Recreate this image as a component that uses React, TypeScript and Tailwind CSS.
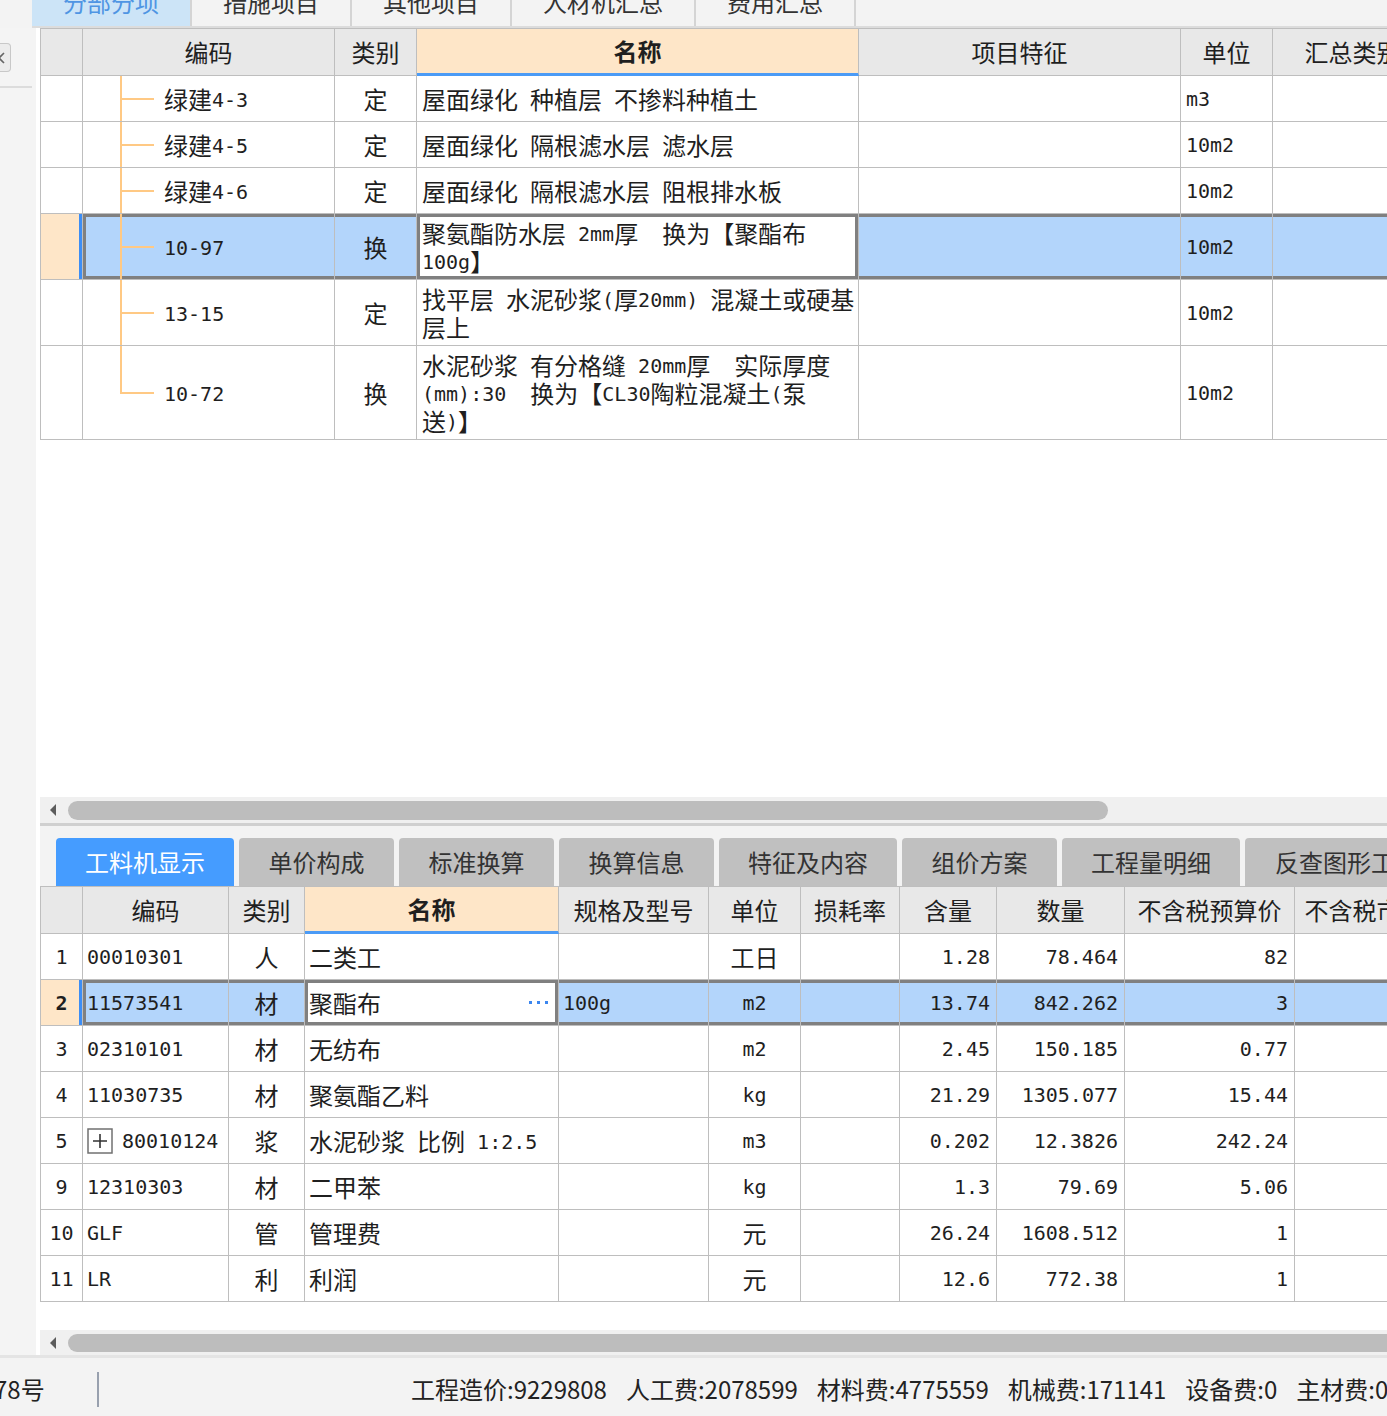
import React from "react";

const LINE = "border-[#bebebe]";

function Txt({ s }: { s: string }) {
  const parts = s.split(/([\x20-\x7e]+)/);
  return (
    <>
      {parts.map((p, i) =>
        p === "" ? null : /^[\x20-\x7e]+$/.test(p) ? (
          <span key={i} className="font-['DejaVu_Sans_Mono',monospace] text-[20px] leading-[20px] align-[2px]">
            {p}
          </span>
        ) : (
          <span key={i}>{p}</span>
        )
      )}
    </>
  );
}

const topTabs = [
  { t: "分部分项", w: "w-[160px]", active: true },
  { t: "措施项目", w: "w-[160px]" },
  { t: "其他项目", w: "w-[160px]" },
  { t: "人材机汇总", w: "w-[184px]" },
  { t: "费用汇总", w: "w-[160px]" },
];

function TopTabs() {
  return (
    <div className="h-[28px] shrink-0 pl-[32px] bg-[#f3f3f3]">
      <div className="h-full border-b-2 border-[#dcdcdc] flex overflow-hidden">
        {topTabs.map((t) => (
          <div
            key={t.t}
            className={`${t.w} shrink-0 h-[26px] overflow-hidden flex flex-col items-center border-r-2 border-[#d4d4d4] ${
              t.active ? "bg-[#cce4f7] text-[#4f95e3]" : "bg-[#f3f3f3] text-[#333]"
            }`}
          >
            <div className="mt-[-18px] h-[40px] leading-[40px] text-[24px] whitespace-nowrap">{t.t}</div>
          </div>
        ))}
      </div>
    </div>
  );
}

function LeftPanel() {
  return (
    <div className="w-[36px] shrink-0 bg-[#f4f4f4] flex flex-col">
      <div className="mt-[15px] h-[29px] w-[11px] rounded-r-[4px] border border-l-0 border-[#c8c8c8] bg-[#ececec] flex items-center overflow-hidden">
        <svg width="8" height="12" viewBox="0 0 8 12" className="-ml-[2px]">
          <path d="M6 1 L1 6 L6 11" stroke="#666" strokeWidth="1.6" fill="none" />
        </svg>
      </div>
      <div className="mt-[14px] h-[2px] w-[32px] bg-[#dcdcdc]" />
    </div>
  );
}

type TopRow = { code: string; type: string; name: string; unit: string; h: string; sel?: boolean };

const topRows: TopRow[] = [
  { code: "绿建4-3", type: "定", name: "屋面绿化 种植层 不掺料种植土", unit: "m3", h: "h-[46px]" },
  { code: "绿建4-5", type: "定", name: "屋面绿化 隔根滤水层 滤水层", unit: "10m2", h: "h-[46px]" },
  { code: "绿建4-6", type: "定", name: "屋面绿化 隔根滤水层 阻根排水板", unit: "10m2", h: "h-[46px]" },
  { code: "10-97", type: "换", name: "聚氨酯防水层 2mm厚　换为【聚酯布 100g】", unit: "10m2", h: "h-[66px]", sel: true },
  { code: "13-15", type: "定", name: "找平层 水泥砂浆(厚20mm) 混凝土或硬基层上", unit: "10m2", h: "h-[66px]" },
  { code: "10-72", type: "换", name: "水泥砂浆 有分格缝 20mm厚　实际厚度(mm):30　换为【CL30陶粒混凝土(泵送)】", unit: "10m2", h: "h-[94px]" },
];

const C = `border-r border-b ${LINE} shrink-0`;
const SEL_Y = "shadow-[inset_0_3px_0_#808080,inset_0_-3px_0_#808080]";
const SEL_L = "shadow-[inset_3px_0_0_#808080,inset_0_3px_0_#808080,inset_0_-3px_0_#808080]";
const SEL_LR = "shadow-[inset_3px_0_0_#808080,inset_-3px_0_0_#808080,inset_0_3px_0_#808080,inset_0_-3px_0_#808080]";
const ROWSEL = "bg-[#fee6c8] shadow-[inset_-3px_0_0_#3d8ef5]";
const BLUE = "bg-[#b3d5fb]";

function TopGrid() {
  return (
    <div className={`w-max border-l border-t ${LINE} text-[24px]`}>
      <div className="flex h-[47px]">
        <div className={`${C} w-[42px] bg-[#e8e8e8]`} />
        <div className={`${C} w-[252px] bg-[#e8e8e8] flex items-center justify-center`}>编码</div>
        <div className={`${C} w-[82px] bg-[#e8e8e8] flex items-center justify-center`}>类别</div>
        <div className={`${C} w-[442px] bg-[#fee6c8] border-b-[3px] border-b-[#4b9bf6] flex items-center justify-center font-bold`}>名称</div>
        <div className={`${C} w-[322px] bg-[#e8e8e8] flex items-center justify-center`}>项目特征</div>
        <div className={`${C} w-[92px] bg-[#e8e8e8] flex items-center justify-center`}>单位</div>
        <div className={`${C} w-[160px] bg-[#e8e8e8] flex items-center justify-center whitespace-nowrap`}>汇总类别</div>
      </div>
      {topRows.map((r, i) => {
        const last = i === topRows.length - 1;
        return (
          <div key={r.code} className={`flex ${r.h}`}>
            <div className={`${C} w-[42px] ${r.sel ? ROWSEL : "bg-white"}`} />
            <div className={`${C} w-[252px] flex items-stretch ${r.sel ? `${BLUE} ${SEL_L}` : ""}`}>
              <div className="w-[37px] shrink-0" />
              <div className="w-[34px] shrink-0 flex flex-col">
                <div className="flex-1 border-l-2 border-b-2 border-[#ffc984]" />
                <div className={`flex-1 ${last ? "" : "border-l-2 border-[#ffc984]"}`} />
              </div>
              <div className="pl-[10px] self-center whitespace-nowrap leading-[28px]">
                <Txt s={r.code} />
              </div>
            </div>
            <div className={`${C} w-[82px] flex items-center justify-center ${r.sel ? `${BLUE} ${SEL_Y}` : ""}`}>{r.type}</div>
            <div className={`${C} w-[442px] flex items-center pl-[5px] pr-px leading-[28px] ${r.sel ? `bg-white ${SEL_LR}` : ""}`}>
              <div>
                <Txt s={r.name} />
              </div>
            </div>
            <div className={`${C} w-[322px] ${r.sel ? `${BLUE} ${SEL_Y}` : ""}`} />
            <div className={`${C} w-[92px] flex items-center pl-[5px] leading-[28px] ${r.sel ? `${BLUE} ${SEL_Y}` : ""}`}>
              <Txt s={r.unit} />
            </div>
            <div className={`${C} w-[160px] ${r.sel ? `${BLUE} ${SEL_Y}` : ""}`} />
          </div>
        );
      })}
    </div>
  );
}

function Arrow() {
  return (
    <svg width="8" height="14" viewBox="0 0 8 14">
      <path d="M7 1 L1 7 L7 13 Z" fill="#5c5c5c" />
    </svg>
  );
}

const bottomTabs = [
  { t: "工料机显示", w: "w-[178px]", active: true },
  { t: "单价构成", w: "w-[155px]" },
  { t: "标准换算", w: "w-[155px]" },
  { t: "换算信息", w: "w-[155px]" },
  { t: "特征及内容", w: "w-[178px]" },
  { t: "组价方案", w: "w-[155px]" },
  { t: "工程量明细", w: "w-[178px]" },
  { t: "反查图形工程量", w: "w-[228px]" },
];

const bCols = [
  { w: "w-[42px]", h: "" },
  { w: "w-[146px]", h: "编码" },
  { w: "w-[76px]", h: "类别" },
  { w: "w-[254px]", h: "名称" },
  { w: "w-[150px]", h: "规格及型号" },
  { w: "w-[92px]", h: "单位" },
  { w: "w-[99px]", h: "损耗率" },
  { w: "w-[97px]", h: "含量" },
  { w: "w-[128px]", h: "数量" },
  { w: "w-[170px]", h: "不含税预算价" },
  { w: "w-[164px]", h: "不含税市场价" },
];

const bRows = [
  ["1", "00010301", "人", "二类工", "", "工日", "", "1.28", "78.464", "82"],
  ["2", "11573541", "材", "聚酯布", "100g", "m2", "", "13.74", "842.262", "3"],
  ["3", "02310101", "材", "无纺布", "", "m2", "", "2.45", "150.185", "0.77"],
  ["4", "11030735", "材", "聚氨酯乙料", "", "kg", "", "21.29", "1305.077", "15.44"],
  ["5", "80010124", "浆", "水泥砂浆 比例 1:2.5", "", "m3", "", "0.202", "12.3826", "242.24"],
  ["9", "12310303", "材", "二甲苯", "", "kg", "", "1.3", "79.69", "5.06"],
  ["10", "GLF", "管", "管理费", "", "元", "", "26.24", "1608.512", "1"],
  ["11", "LR", "利", "利润", "", "元", "", "12.6", "772.38", "1"],
];

function BottomGrid() {
  return (
    <div className={`w-max border-l border-t ${LINE} text-[24px] bg-white leading-[28px]`}>
      <div className="flex h-[47px]">
        {bCols.map((c, i) => (
          <div
            key={i}
            className={`${C} ${c.w} flex items-center justify-center whitespace-nowrap ${
              i === 3 ? "bg-[#fee6c8] border-b-[3px] border-b-[#4b9bf6] font-bold" : "bg-[#e8e8e8]"
            }`}
          >
            {c.h}
          </div>
        ))}
      </div>
      {bRows.map((r) => {
        const sel = r[0] === "2";
        const y = sel ? `${BLUE} ${SEL_Y}` : "";
        return (
          <div key={r[0]} className="flex h-[46px]">
            <div className={`${C} w-[42px] flex items-center justify-center ${sel ? `${ROWSEL} font-bold` : ""}`}>
              <Txt s={r[0]} />
            </div>
            <div className={`${C} w-[146px] flex items-center pl-[4px] whitespace-nowrap ${sel ? `${BLUE} ${SEL_L}` : ""}`}>
              {r[0] === "5" ? (
                <>
                  <svg width="26" height="26" viewBox="0 0 26 26" className="mr-[9px] shrink-0">
                    <rect x="1" y="1" width="24" height="24" fill="white" stroke="#707070" strokeWidth="1.5" />
                    <path d="M6 13 H20 M13 6 V20" stroke="#333" strokeWidth="1.6" />
                  </svg>
                  <Txt s={r[1]} />
                </>
              ) : (
                <Txt s={r[1]} />
              )}
            </div>
            <div className={`${C} w-[76px] flex items-center justify-center ${y}`}>{r[2]}</div>
            <div className={`${C} w-[254px] flex items-center pl-[4px] whitespace-nowrap ${sel ? `bg-white ${SEL_LR} justify-between pr-[10px]` : ""}`}>
              <span>
                <Txt s={r[3]} />
              </span>
              {sel ? (
                <span className="flex gap-[5px] items-center">
                  <span className="w-[3px] h-[3px] bg-[#3b86ef]" />
                  <span className="w-[3px] h-[3px] bg-[#3b86ef]" />
                  <span className="w-[3px] h-[3px] bg-[#3b86ef]" />
                </span>
              ) : null}
            </div>
            <div className={`${C} w-[150px] flex items-center pl-[4px] ${y}`}>
              <Txt s={r[4]} />
            </div>
            <div className={`${C} w-[92px] flex items-center justify-center ${y}`}>
              <Txt s={r[5]} />
            </div>
            <div className={`${C} w-[99px] ${y}`} />
            <div className={`${C} w-[97px] flex items-center justify-end pr-[6px] ${y}`}>
              <Txt s={r[7]} />
            </div>
            <div className={`${C} w-[128px] flex items-center justify-end pr-[6px] ${y}`}>
              <Txt s={r[8]} />
            </div>
            <div className={`${C} w-[170px] flex items-center justify-end pr-[6px] ${y}`}>
              <Txt s={r[9]} />
            </div>
            <div className={`${C} w-[164px] ${y}`} />
          </div>
        );
      })}
    </div>
  );
}

function StatusBar() {
  const items = ["工程造价:9229808", "人工费:2078599", "材料费:4775559", "机械费:171141", "设备费:0", "主材费:0"];
  return (
    <div className="h-[61px] shrink-0 border-t-[3px] border-[#e4e4e4] bg-[#f3f3f3] flex items-center pt-[4px] text-[24px] text-[#222] whitespace-nowrap overflow-hidden">
      <span className="-ml-[6px] w-[51px] shrink-0">78号</span>
      <div className="ml-[52px] w-[2px] h-[35px] bg-[#98a0ae] shrink-0" />
      <div className="ml-[312px] flex gap-[19px] shrink-0">
        {items.map((t) => (
          <span key={t}>{t}</span>
        ))}
      </div>
    </div>
  );
}

export default function App() {
  return (
    <div className="w-[1387px] h-[1416px] overflow-hidden flex flex-col bg-[#f3f3f3] font-['Noto_Sans_CJK_SC',sans-serif] text-[#1f1f1f]">
      <TopTabs />
      <div className="flex h-[1327px] shrink-0">
        <LeftPanel />
        <div className="w-[1351px] shrink-0 bg-white pl-[4px] flex flex-col overflow-hidden">
          <div className="h-[769px] shrink-0 overflow-hidden">
            <TopGrid />
          </div>
          <div className="h-[29px] shrink-0 bg-[#f0f0f0] border-b-[3px] border-[#d0d0d0] flex items-center">
            <div className="w-[28px] shrink-0 pl-[9px] flex items-center">
              <Arrow />
            </div>
            <div className="w-[1040px] h-[19px] shrink-0 rounded-full bg-[#bdbdbd]" />
          </div>
          <div className="h-[60px] shrink-0 bg-[#f3f3f3] pt-[12px] pl-[16px] flex gap-[5px] overflow-hidden">
            {bottomTabs.map((t) => (
              <div
                key={t.t}
                className={`${t.w} shrink-0 h-[48px] rounded-t-[4px] flex items-center justify-center text-[24px] whitespace-nowrap overflow-hidden ${
                  t.active ? "bg-[#459cff] text-white" : "bg-[#c0c0c0] text-[#333]"
                }`}
              >
                {t.t}
              </div>
            ))}
          </div>
          <div className="h-[444px] shrink-0 overflow-hidden">
            <BottomGrid />
          </div>
          <div className="h-[25px] shrink-0 bg-[#f0f0f0] flex items-center">
            <div className="w-[28px] shrink-0 pl-[9px] flex items-center">
              <Arrow />
            </div>
            <div className="w-[1400px] h-[18px] shrink-0 rounded-full bg-[#bdbdbd]" />
          </div>
        </div>
      </div>
      <StatusBar />
    </div>
  );
}
